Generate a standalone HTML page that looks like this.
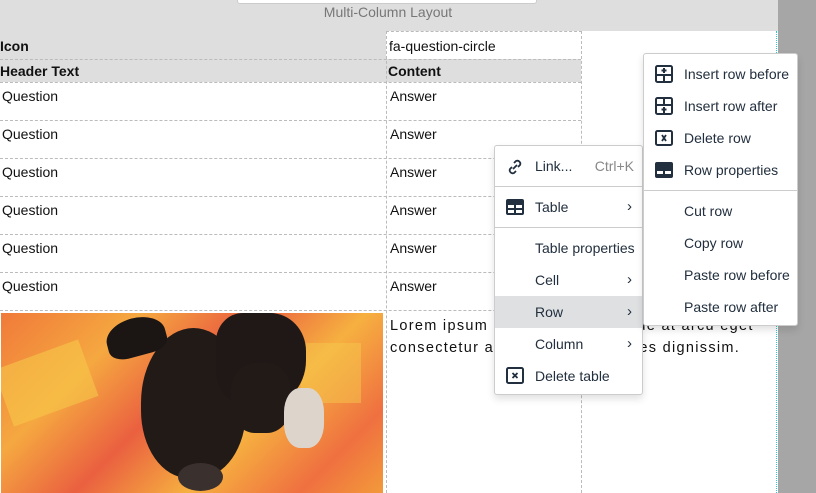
<!DOCTYPE html>
<html><head><style>
*{margin:0;padding:0;box-sizing:border-box}
body{width:816px;height:493px;overflow:hidden;background:#fff;font-family:"Liberation Sans","DejaVu Sans",sans-serif;position:relative;color:#222f3e}
.abs{position:absolute}
.t{font-size:14px;color:#111}
.menu{position:absolute;background:#fff;border:1px solid #ccc;border-radius:3px;box-shadow:0 4px 8px rgba(0,0,0,.12)}
.mi{position:absolute;left:0;right:0;height:32px;font-size:14px;color:#222f3e;line-height:32px}
.sep{position:absolute;left:0;right:0;border-top:1px solid #ccc}
.chev{position:absolute;right:10px;top:0;font-size:15px}
</style></head><body>
<div class="abs" style="left:0;top:0;width:778px;height:31px;background:#dedede"></div>
<div class="abs" style="left:237px;top:-4px;width:300px;height:8px;background:#fff;border:1px solid #ccc;border-radius:3px"></div>
<div class="abs" style="left:0;top:4px;width:776px;text-align:center;font-size:14px;color:#777">Multi-Column Layout</div>
<div class="abs" style="left:776px;top:31px;width:2px;height:462px;border-left:1px dotted #2cd"></div>
<div class="abs" style="left:778px;top:0;width:38px;height:493px;background:#a6a6a6"></div>
<!-- table -->
<div class="abs" style="left:0;top:31px;width:386px;height:28px;background:#dedede"></div>
<div class="abs" style="left:0;top:59px;width:581px;height:23px;background:#dedede"></div>
<div class="abs" style="left:386px;top:31px;width:196px;height:462px;border-left:1px dashed #bbb;border-right:1px dashed #bbb"></div>
<div class="abs" style="left:386px;top:31px;width:196px;border-top:1px dashed #bbb"></div>
<div class="abs" style="left:0;top:59px;width:581px;border-top:1px dashed #bbb"></div>
<div class="abs" style="left:0;top:82px;width:581px;border-top:1px dashed #bbb"></div>
<div class="abs" style="left:0;top:120px;width:581px;border-top:1px dashed #bbb"></div>
<div class="abs" style="left:0;top:158px;width:581px;border-top:1px dashed #bbb"></div>
<div class="abs" style="left:0;top:196px;width:581px;border-top:1px dashed #bbb"></div>
<div class="abs" style="left:0;top:234px;width:581px;border-top:1px dashed #bbb"></div>
<div class="abs" style="left:0;top:272px;width:581px;border-top:1px dashed #bbb"></div>
<div class="abs" style="left:0;top:310px;width:581px;border-top:1px dashed #bbb"></div>
<div class="abs t" style="left:0;top:38px;font-weight:bold">Icon</div>
<div class="abs t" style="left:389px;top:38px">fa-question-circle</div>
<div class="abs t" style="left:0;top:63px;font-weight:bold">Header Text</div>
<div class="abs t" style="left:388px;top:63px;font-weight:bold">Content</div>
<div class="abs t" style="left:2px;top:88px">Question</div><div class="abs t" style="left:390px;top:88px">Answer</div>
<div class="abs t" style="left:2px;top:126px">Question</div><div class="abs t" style="left:390px;top:126px">Answer</div>
<div class="abs t" style="left:2px;top:164px">Question</div><div class="abs t" style="left:390px;top:164px">Answer</div>
<div class="abs t" style="left:2px;top:202px">Question</div><div class="abs t" style="left:390px;top:202px">Answer</div>
<div class="abs t" style="left:2px;top:240px">Question</div><div class="abs t" style="left:390px;top:240px">Answer</div>
<div class="abs t" style="left:2px;top:278px">Question</div><div class="abs t" style="left:390px;top:278px">Answer</div>
<div class="abs t" style="left:390px;top:315px;line-height:22px;width:390px;white-space:nowrap;font-size:14.5px;letter-spacing:1.3px">Lorem ipsum dolor sit amet, neque at arcu eget<br>consectetur adipiscing elit ultricies dignissim.</div>
<!-- image -->
<div class="abs" style="left:1px;top:313px;width:382px;height:180px;overflow:hidden;background:linear-gradient(135deg,#f07a3a 0%,#f5a840 25%,#ea6040 45%,#f6b040 65%,#ef7040 85%,#f39a3a 100%)">
<div class="abs" style="left:0;top:40px;width:90px;height:60px;background:#f6c84a;opacity:.6;transform:rotate(-20deg)"></div>
<div class="abs" style="left:300px;top:30px;width:60px;height:60px;background:#f5c84c;opacity:.5"></div>
<div class="abs" style="left:140px;top:15px;width:105px;height:150px;background:#221a17;border-radius:50% 50% 45% 45%"></div>
<div class="abs" style="left:105px;top:5px;width:60px;height:38px;background:#1b1513;border-radius:50% 50% 30% 30%;transform:rotate(-15deg)"></div>
<div class="abs" style="left:215px;top:0;width:90px;height:95px;background:#201816;border-radius:30% 40% 50% 40%"></div>
<div class="abs" style="left:230px;top:50px;width:60px;height:70px;background:#221a17;border-radius:40%"></div>
<div class="abs" style="left:283px;top:75px;width:40px;height:60px;background:#ddd5cc;border-radius:40%"></div>
<div class="abs" style="left:177px;top:150px;width:45px;height:28px;background:#3a302d;border-radius:50%"></div>
</div>
<!-- menu 1 -->
<div class="menu" style="left:494px;top:145px;width:149px;height:250px">
<div class="mi" style="top:4px"><svg class="abs" style="left:11px;top:8px" width="18" height="18" viewBox="0 0 18 18" fill="none" stroke="#222f3e" stroke-width="1.8"><path d="M7 11l4-4M8 5l2-2a3 3 0 014 4l-2 2M10 13l-2 2a3 3 0 01-4-4l2-2"/></svg><span class="abs" style="left:40px">Link...</span><span class="abs" style="right:8px;color:#888">Ctrl+K</span></div>
<div class="sep" style="top:40px"></div>
<div class="mi" style="top:45px"><svg class="abs" style="left:11px;top:8px" width="18" height="16" viewBox="0 0 18 16"><rect x="0" y="0" width="18" height="16" rx="2" fill="#222f3e"/><rect x="2" y="6" width="6" height="3" fill="#fff"/><rect x="10" y="6" width="6" height="3" fill="#fff"/><rect x="2" y="11" width="6" height="3" fill="#fff"/><rect x="10" y="11" width="6" height="3" fill="#fff"/></svg><span class="abs" style="left:40px">Table</span><span class="chev">›</span></div>
<div class="sep" style="top:81px"></div>
<div class="mi" style="top:86px"><span class="abs" style="left:40px">Table properties</span></div>
<div class="mi" style="top:118px"><span class="abs" style="left:40px">Cell</span><span class="chev">›</span></div>
<div class="mi" style="top:150px;background:#dee0e2"><span class="abs" style="left:40px">Row</span><span class="chev">›</span></div>
<div class="mi" style="top:182px"><span class="abs" style="left:40px">Column</span><span class="chev">›</span></div>
<div class="mi" style="top:214px"><svg class="abs" style="left:11px;top:7px" width="18" height="17" viewBox="0 0 18 17"><rect x="1" y="1" width="16" height="15" rx="1.5" fill="none" stroke="#222f3e" stroke-width="2"/><path d="M6.5 6l5 5M11.5 6l-5 5" stroke="#222f3e" stroke-width="1.8"/></svg><span class="abs" style="left:40px">Delete table</span></div>
</div>
<!-- submenu -->
<div class="menu" style="left:643px;top:53px;width:155px;height:273px">
<div class="mi" style="top:4px"><svg class="abs" style="left:11px;top:7px" width="18" height="18" viewBox="0 0 18 18"><rect x="1" y="1" width="16" height="16" rx="1.5" fill="none" stroke="#222f3e" stroke-width="2"/><path d="M1 10h16M9 10v7M9 3v5M6.5 5.5h5" stroke="#222f3e" stroke-width="2"/></svg><span class="abs" style="left:40px">Insert row before</span></div>
<div class="mi" style="top:36px"><svg class="abs" style="left:11px;top:7px" width="18" height="18" viewBox="0 0 18 18"><rect x="1" y="1" width="16" height="16" rx="1.5" fill="none" stroke="#222f3e" stroke-width="2"/><path d="M1 8h16M9 1v7M9 10v6M6.5 12.5h5" stroke="#222f3e" stroke-width="2"/></svg><span class="abs" style="left:40px">Insert row after</span></div>
<div class="mi" style="top:68px"><svg class="abs" style="left:11px;top:8px" width="18" height="16" viewBox="0 0 18 16"><rect x="1" y="1" width="16" height="14" rx="1.5" fill="none" stroke="#222f3e" stroke-width="2"/><path d="M7 5l4 6M11 5l-4 6" stroke="#222f3e" stroke-width="1.8"/></svg><span class="abs" style="left:40px">Delete row</span></div>
<div class="mi" style="top:100px"><svg class="abs" style="left:11px;top:8px" width="18" height="16" viewBox="0 0 18 16"><rect x="0" y="0" width="18" height="16" rx="2" fill="#222f3e"/><rect x="2" y="9" width="6" height="3" fill="#fff"/><rect x="10" y="9" width="6" height="3" fill="#fff"/></svg><span class="abs" style="left:40px">Row properties</span></div>
<div class="sep" style="top:136px"></div>
<div class="mi" style="top:141px"><span class="abs" style="left:40px">Cut row</span></div>
<div class="mi" style="top:173px"><span class="abs" style="left:40px">Copy row</span></div>
<div class="mi" style="top:205px"><span class="abs" style="left:40px">Paste row before</span></div>
<div class="mi" style="top:237px"><span class="abs" style="left:40px">Paste row after</span></div>
</div>
</body></html>
